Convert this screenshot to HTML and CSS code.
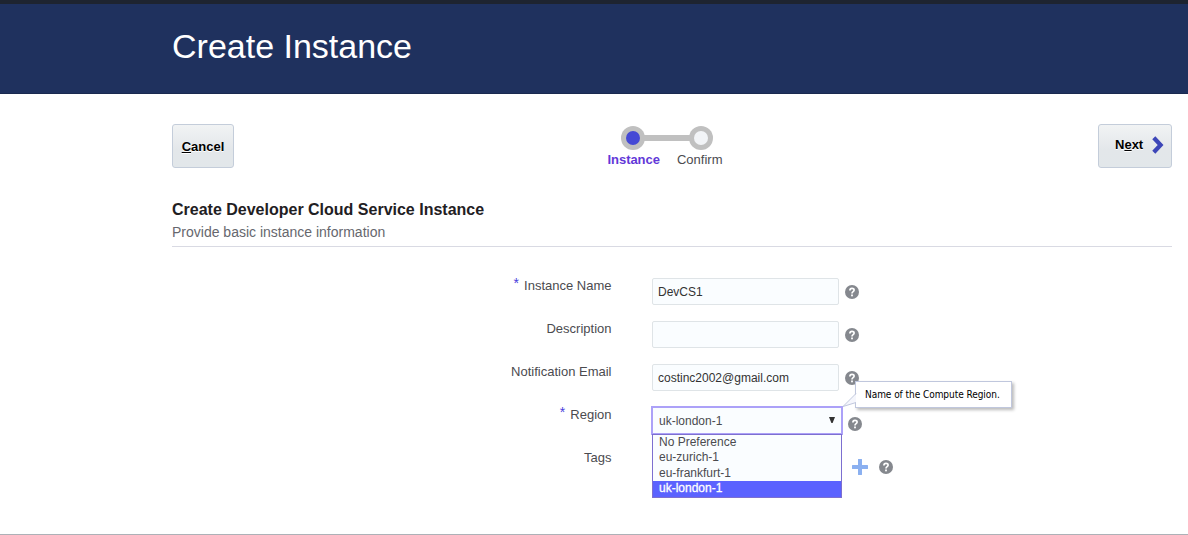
FILE: index.html
```html
<!DOCTYPE html>
<html lang="en">
<head>
<meta charset="utf-8">
<title>Create Instance</title>
<link rel="stylesheet" href="styles.css">
</head>
<body>
<svg class="defs" width="0" height="0">
  <symbol id="help" viewBox="0 0 14 14">
    <circle cx="7" cy="7" r="7" fill="#85888e"/>
    <path d="M4.9 5.4C4.9 2.7 9.1 2.8 9.1 5.1C9.1 6.7 7 6.6 7 8.4" fill="none" stroke="#fff" stroke-width="1.7"/>
    <rect x="6.1" y="9.5" width="1.8" height="1.8" fill="#fff"/>
  </symbol>
</svg>
<div class="page">
  <header class="banner"><h1>Create Instance</h1></header>
  <main class="content">
    <div class="toolbar">
      <button class="btn cancel"><span><u>C</u>ancel</span></button>
      <div class="train">
        <svg class="track" width="92" height="24" viewBox="0 0 92 24">
          <path d="M12 12H80" stroke="#c0c0c0" stroke-width="6"/>
          <circle cx="12" cy="12" r="12" fill="#c0c0c0"/>
          <circle cx="12" cy="12" r="7" fill="#4549d5"/>
          <circle cx="80" cy="12" r="12" fill="#c0c0c0"/>
          <circle cx="80" cy="12" r="7" fill="#f2f4f7"/>
        </svg>
        <div class="steps"><b>Instance</b><span>Confirm</span></div>
      </div>
      <button class="btn next"><span>N<u>e</u>xt</span>
        <svg width="12" height="18" viewBox="0 0 12 18"><path d="M1.8 1.8L8.6 9L1.8 16.2" fill="none" stroke="#3d46b8" stroke-width="4.2"/></svg>
      </button>
    </div>
    <section class="heading">
      <h2>Create Developer Cloud Service Instance</h2>
      <p>Provide basic instance information</p>
    </section>
    <form class="form">
      <div class="row"><label><i>*</i>Instance Name</label><div class="field">DevCS1</div><svg class="help"><use href="#help"/></svg></div>
      <div class="row"><label>Description</label><div class="field"></div><svg class="help"><use href="#help"/></svg></div>
      <div class="row"><label>Notification Email</label><div class="field">costinc2002@gmail.com</div><svg class="help"><use href="#help"/></svg></div>
      <div class="row region"><label><i>*</i>Region</label>
        <div class="select"><span>uk-london-1</span><svg width="6" height="6" viewBox="0 0 6 6"><path d="M0 0H6L3.6 6H2.4Z" fill="#333"/></svg>
          <ul class="menu"><li>No Preference</li><li>eu-zurich-1</li><li>eu-frankfurt-1</li><li class="active">uk-london-1</li></ul>
          <div class="tooltip"><svg class="tail" width="15" height="28" viewBox="0 0 15 28"><path d="M14 13L1.5 25.5L14 21.5Z" fill="#f5f6fc"/><path d="M14 12.5L1 25.5L14 21.5" fill="none" stroke="#c0c7dd"/></svg>Name of the Compute Region.</div>
        </div>
        <svg class="help"><use href="#help"/></svg>
      </div>
      <div class="row tags"><label>Tags</label>
        <svg class="plus" width="16" height="16" viewBox="0 0 16 16"><path d="M8 1V15M1 8H15" stroke="#8bb0f0" stroke-width="4" stroke-linecap="round"/></svg>
        <svg class="help"><use href="#help"/></svg>
      </div>
    </form>
  </main>
</div>
</body>
</html>
```
FILE: styles.css
```css
* { box-sizing: border-box; }
body { margin: 0; font: 13px/15px "Liberation Sans", Arial, sans-serif; color: #4b4b4f; background: #fff; }
h1, h2, p, ul { margin: 0; padding: 0; }
svg { display: block; flex: none; }
.defs { position: absolute; }
.page { height: 535px; overflow: hidden; border-top: 4px solid #1e2430; border-bottom: 1px solid #adb1b7; }
.banner { height: 90px; padding: 22px 0 0 172px; background: #1f315e; border-bottom: 1px solid #1a294f; }
.banner h1 { font-size: 34px; line-height: 40px; font-weight: 400; color: #fff; }
.content { width: 1000px; margin-left: 172px; padding-top: 30px; }
.toolbar { display: flex; justify-content: space-between; height: 44px; }
.btn { display: flex; align-items: center; height: 44px; padding: 0; border: 1px solid #c4cdda; border-radius: 3px; background: linear-gradient(#f1f3f4, #e3e7ea 60%, #e2e7ea); font: bold 13px/15px "Liberation Sans", Arial, sans-serif; color: #000; text-shadow: 0 1px #fff; }
.btn u { text-underline-offset: 1px; text-decoration-thickness: 1px; }
.cancel { width: 62px; justify-content: center; }
.next { width: 74px; padding-left: 16px; gap: 9px; }
.next span { margin-top: -3px; }
.next svg { margin-top: -2px; }
.train { width: 116px; margin: 2px 8px 0 5px; }
.track { margin-left: 14px; }
.steps { display: flex; justify-content: space-between; align-items: baseline; margin-top: 2px; padding-left: 1px; white-space: nowrap; }
.steps b { color: #6238d8; font-size: 13px; letter-spacing: -0.05px; }
.steps span { font-size: 13px; }
.heading { height: 79px; padding-top: 32px; border-bottom: 1px solid #d9dae3; }
.heading h2 { font-size: 16px; line-height: 20px; color: #1f2023; white-space: nowrap; }
.heading p { margin-top: 4px; font-size: 14px; line-height: 16px; color: #66676e; }
.form { padding-top: 31px; }
.row { display: flex; height: 43px; }
.row label { width: 439.5px; margin-right: 40.5px; text-align: right; }
.row label i { position: relative; top: -2px; margin-right: 5px; font-style: normal; font-size: 14px; color: #4a40dc; }
.field { width: 187px; height: 27px; padding: 6px 5px 0; border: 1px solid #dfe4e7; border-radius: 2px; background: #fafdff; font-size: 12px; color: #333; }
.help { width: 14px; height: 14px; margin: 7px 0 0 6px; }
.select { position: relative; display: flex; width: 192px; height: 29px; margin: -1px 0 0 -1px; padding: 6px 7px 0 6px; justify-content: space-between; border: 2px solid #aca1f8; background: #fafdff; font-size: 12px; }
.select > svg { margin-top: 3px; margin-right: -1px; }
.region .help { margin-top: 10px; margin-left: 5px; }
.menu { position: absolute; left: -1px; top: 26px; width: 190px; height: 64px; border: 1px solid #7d6fd0; list-style: none; background: #fafdff; font-size: 12px; }
.menu li { height: 15.4px; padding-left: 6px; line-height: 14px; }
.menu .active { height: 15.8px; background: #5b62ff; color: #fff; -webkit-text-stroke: 0.3px #fff; }
.tooltip { position: absolute; left: 202px; top: -27px; width: 157px; height: 27px; padding-left: 9px; border: 1px solid #c0c7dd; background: #fff; box-shadow: 2px 2px 3px #bbb; font: 10px/26px "DejaVu Sans Condensed", "DejaVu Sans", sans-serif; letter-spacing: -0.05px; color: #000; white-space: nowrap; }
.tail { position: absolute; left: -14px; top: -1px; }
.tags .plus { margin: 9px 0 0 200px; }
.tags .help { margin: 10px 0 0 11px; }
```
